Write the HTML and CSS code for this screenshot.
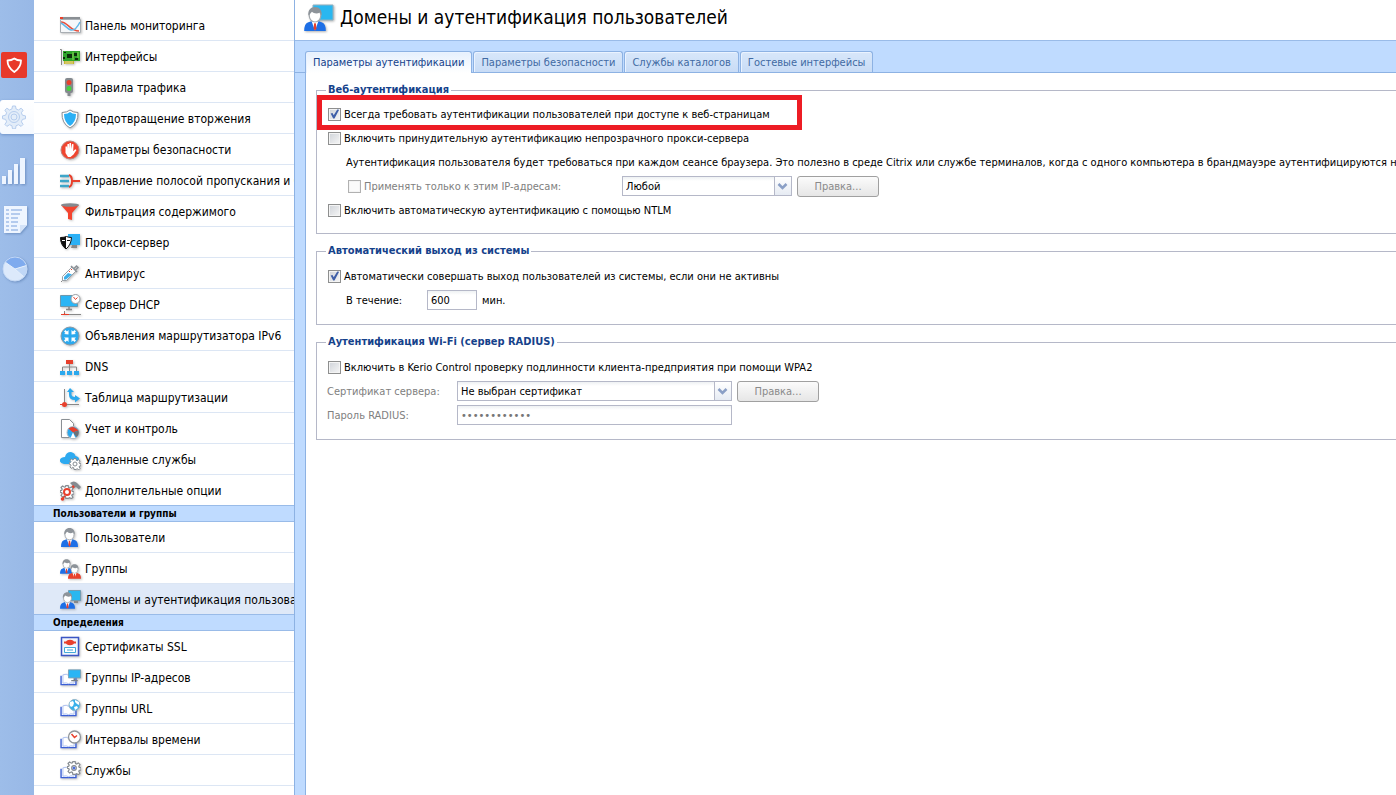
FILE: index.html
```html
<!DOCTYPE html>
<html lang="ru">
<head>
    <meta charset="UTF-8">
    <title>Домены и аутентификация пользователей</title>
    <link rel="stylesheet" href="styles.css">
</head>
<body>
    <!-- shared icon parts -->
    <svg class="defs" aria-hidden="true">
        <symbol id="person" viewBox="0 0 18 20">
            <path d="M0 20q0-6 3-7l4-1.500h4l4 1.500q3 1 3 7z" fill="currentColor"/>
            <path d="M6 11.500l3 8 3-8z" fill="#fff"/>
            <path d="M8.300 13.500h1.400l.5 4.500-1.200 1.800-1.200-1.800z" fill="#e8402c"/>
            <ellipse cx="9" cy="7" rx="4.800" ry="5.500" fill="#fff" stroke="#a3a8ad"/>
            <path d="M3.500 7C3 2.500 5.500 0 9 0s6 2.500 5.500 7l-1.500-2.500C11 6 8 5.500 6.500 4z" fill="#8d9399"/>
        </symbol>
        <symbol id="screen" viewBox="0 0 16 15">
            <path d="M.5.5h15v10H.5z" fill="#2bb5f5" stroke="#7d9bad"/>
            <path d="M7 11h2v2h3v1.500H4V13h3z" fill="#777f86"/>
        </symbol>
        <symbol id="book" viewBox="0 0 18 14">
            <path d="M1 3v9.500h16V3" fill="#fff" stroke="#3b5fd6" stroke-width="1.500"/>
            <path d="M3 11V2q4-1.500 6 .5 2-2 6-.5v9q-4-1-6 .5-2-1.500-6-.5z" fill="#fff" stroke="#a9bdf0"/>
        </symbol>
        <symbol id="gear" viewBox="0 0 24 24">
            <path d="M10 1h4l.6 3.500 2 .8 2.900-2 2.700 2.800-2 2.900.8 2 3 .6v3.800l-3 .6-.8 2 2 2.900-2.700 2.700-2.900-2-2 .9L14 23h-4l-.6-3.500-2-.9-2.900 2-2.700-2.700 2-2.900-.8-2-2.500-.6V9.600L3 9l.8-2-2-2.900L4.500 1.800l2.900 2 2-.8z" fill="#fff" stroke="currentColor" stroke-width="2"/>
            <circle cx="12" cy="12" r="4" fill="none" stroke="currentColor" stroke-width="2"/>
        </symbol>
    </svg>

    <div class="app">
        <nav class="rail" aria-label="Разделы">
            <a href="#" class="rail-logo" aria-label="Kerio Control">
                <svg width="26" height="26" viewBox="0 0 26 26"><rect width="26" height="26" rx="2" fill="#e8392a"/><path d="M6.500 8.500q4 0 6.800-2 2.700 2 6.700 2 0 7-6.700 11.500Q6.500 15.500 6.500 8.500z" fill="none" stroke="#fff" stroke-width="1.800" stroke-linejoin="round"/></svg>
            </a>
            <a href="#" class="rail-item active" aria-label="Конфигурация">
                <svg width="24" height="24" viewBox="0 0 24 24"><g fill="none" stroke="#b6cdee"><path d="M10.500 1h3l.6 3 2.400 1 2.600-1.800 2 2-1.700 2.600 1 2.400 3.100.7v2.800l-3.100.7-1 2.400 1.700 2.600-2 2-2.600-1.700-2.400 1-.6 3.100h-3l-.6-3.100-2.400-1-2.600 1.700-2-2 1.700-2.600-1-2.400-3.100-.7v-2.800l3.100-.7 1-2.400-1.700-2.600 2-2L7.500 5l2.400-1z" fill="#e3edf9"/><circle cx="12" cy="12" r="5.500"/><circle cx="12" cy="12" r="3"/></g></svg>
            </a>
            <a href="#" class="rail-item" aria-label="Состояние">
                <svg width="24" height="28" viewBox="0 0 24 28"><path d="M0 19h4v8H0zM6 13h4v14H6zM12 7h4v20h-4zM18 1h5v26h-5z" fill="#eef5ff"/></svg>
            </a>
            <a href="#" class="rail-item wide-icon" aria-label="Журналы">
                <svg width="24" height="28" viewBox="0 0 24 28"><path d="M0 0h23v19l-7 8H0z" fill="#eef5ff"/><path d="M16 27v-8h7z" fill="#d3e2f8"/><path d="M2 4h3M7 4h11M2 8h3M7 8h9M2 12h3M7 12h7M2 16h3M7 16h7M2 20h3M7 20h6M2 24h3M7 24h7" stroke="#b4cbee" stroke-width="2"/></svg>
            </a>
            <a href="#" class="rail-item" aria-label="Отчеты">
                <svg width="26" height="26" viewBox="0 0 26 26"><circle cx="13" cy="13" r="12" fill="#dce9fb"/><path d="M13 13L3 6A12 12 0 0 1 24.500 9.500z" fill="#7fabee"/><path d="M13 13l11.500-3.500A12 12 0 0 1 22 21z" fill="#c0d7f6"/><path d="M13 13L3 6M13 13l11.500-3.500M13 13l9 8" stroke="#e6f0fd"/><circle cx="13" cy="13" r="12" fill="none" stroke="#c3d8f5"/></svg>
            </a>
        </nav>

        <nav class="sidebar" aria-label="Меню">
            <ul>
                <li><a href="#">
                    <svg viewBox="0 0 22 22"><path d="M.5 4.500h20v13H.5z" fill="#f6f8fa" stroke="#a9aeb3"/><path d="M0 2h20v2H0z" fill="#8a8f94"/><path d="M0 2h3v2H0z" fill="#e8402c"/><path d="M1 7c7 0 9 9 18 9" fill="none" stroke="#e8503c" stroke-width="1.500"/><path d="M1 8c4 2 6 6 10 7s7-4 9-8" fill="none" stroke="#62b7e8" stroke-width="1.500"/></svg>
                    Панель мониторинга</a></li>
                <li><a href="#">
                    <svg viewBox="0 0 22 22"><path d="M0 3.500h1.500V19" fill="none" stroke="#888"/><path d="M3 5h17v10H3z" fill="#2fa32c"/><path d="M4 15h10v3H4z" fill="#c4b52c"/><path d="M6 15v3m2-3v3m2-3v3m2-3v3" stroke="#fff" stroke-width=".5"/><path d="M7 8h5v4H7zM14 7h3v3h-3zM3 11h2v2H3zM15 12h3v2h-3zM4 6h2v1H4z" fill="#0c2c0c"/><path d="M13 6v8M18 6v6" stroke="#8ad650"/></svg>
                    Интерфейсы</a></li>
                <li><a href="#">
                    <svg viewBox="0 0 22 22"><rect x="5" y="1" width="8" height="15" rx="2" fill="#84898e"/><path d="M7.500 16h3v3h-3z" fill="#84898e"/><circle cx="9" cy="5.500" r="2.500" fill="#e8402c"/><circle cx="9" cy="11.500" r="2.500" fill="#45d13e"/></svg>
                    Правила трафика</a></li>
                <li><a href="#">
                    <svg viewBox="0 0 22 22"><path d="M2 4.500q5 0 8-2.500 3 2.500 8 2.500.5 11-8 15.500Q1.500 15.500 2 4.500z" fill="#fff" stroke="#888e94"/><path d="M4 6q4 0 6-2 2 2 6 2 0 8-6 12Q4 14 4 6z" fill="#2bb0f5"/></svg>
                    Предотвращение вторжения</a></li>
                <li><a href="#">
                    <svg viewBox="0 0 22 22"><circle cx="10" cy="11" r="9" fill="#f0452f" stroke="#c08078"/><path d="M5.500 11V7.500h1.500V10l.5-5H9v5l.5-6H11l.2 6 .8-5 1.500.3-.3 7 2-2 1.300.8-3 4.400-3 2.500H8L5.500 14z" fill="#fff"/></svg>
                    Параметры безопасности</a></li>
                <li><a href="#">
                    <svg viewBox="0 0 22 22"><path d="M0 6h9M0 11h9M0 16h9" stroke="#3ea6c9" stroke-width="2.500"/><path d="M9 5q3 1 3 6 0 5-3 6M12 11h8" fill="none" stroke="#e8402c" stroke-width="2"/></svg>
                    Управление полосой пропускания и QoS</a></li>
                <li><a href="#">
                    <svg viewBox="0 0 22 22"><path d="M1 4h18l-7 8v7l-4-1v-6z" fill="#f4442e"/><ellipse cx="10" cy="4" rx="9" ry="1.800" fill="#858a8f"/></svg>
                    Фильтрация содержимого</a></li>
                <li><a href="#">
                    <svg viewBox="0 0 22 22"><path d="M8 2h12v11H8z" fill="#2bb0f5"/><path d="M12 13h5v3h-6z" fill="#888"/><path d="M.5 5.500q4 0 6-1 2 1 5 1Q11 13 6 17 .5 13 .5 5.500z" fill="#fff" stroke="#111"/><path d="M.5 5.500q4 0 5.500-1V17Q.5 13 .5 5.500z" fill="#111"/><path d="M2 8.500h3" stroke="#fff"/><path d="M7 8.500h3" stroke="#111"/></svg>
                    Прокси-сервер</a></li>
                <li><a href="#">
                    <svg viewBox="0 0 22 22"><path d="M1 19l3-3" stroke="#888"/><path d="M2.500 13.500L12 4l4 4-9.500 9.500H2.500z" fill="#fff" stroke="#9aa0a6"/><path d="M4 14l4-4 4 1.500L6 16.500H4z" fill="#3eaee8"/><path d="M11 3l6 6M14 5.500l2.500-2.500 1.500 1.500-2.500 2.500" fill="none" stroke="#8b9197" stroke-width="1.500"/><path d="M9 8l1 1m1-3l1 1" stroke="#e8402c"/></svg>
                    Антивирус</a></li>
                <li><a href="#">
                    <svg viewBox="0 0 22 22"><path d="M.5 1.500h17v11H.5z" fill="#2bb5f5" stroke="#6d98ad"/><path d="M9 13v3M6 15.500h6" stroke="#888" stroke-width="1.500"/><path d="M4.500 17v3M1 20.500h20" stroke="#888"/><path d="M1 20.500h8M4.500 19v2" stroke="#e8402c"/><circle cx="15.500" cy="5" r="4.500" fill="#fff" stroke="#9a9fa4"/><path d="M13.500 3l2 2.500 2-2" fill="none" stroke="#e8402c"/></svg>
                    Сервер DHCP</a></li>
                <li><a href="#">
                    <svg viewBox="0 0 22 22"><circle cx="10" cy="11" r="9" fill="#2ba9ee" stroke="#8799a6"/><path d="M8.500 9.500L4 9l1.500-1L4 6.500 5.500 5 7 6.500 8.500 5zM11.500 9.500V5L13 6.500 14.500 5 16 6.500 14.500 8l1.500 1zM8.500 12.500V17L7 15.500 5.500 17 4 15.500 5.500 14 4 12.500zM11.500 12.500H16L14.500 14l1.500 1.500-1.500 1.500-1.500-1.500-1.500 1.500z" fill="#fff"/></svg>
                    Объявления маршрутизатора IPv6</a></li>
                <li><a href="#">
                    <svg viewBox="0 0 22 22"><path d="M9.500 8v8M2.500 16v-5h14v5" fill="none" stroke="#888"/><path d="M6 4h7v4H6z" fill="#e8402c"/><path d="M0 15h5v4H0zM7 15h5v4H7zM14 15h5v4h-5z" fill="#2ba9ee"/></svg>
                    DNS</a></li>
                <li><a href="#">
                    <svg viewBox="0 0 22 22"><path d="M4.500 2v15.500H19" fill="none" stroke="#888"/><circle cx="4.500" cy="17.500" r="2.500" fill="#e8402c"/><path d="M0 17.500h4M4.500 20v-3" stroke="#e8402c"/><path d="M10 1l4 4h-2.500v3Q12 10 15 10V8l5 3.500-5 4v-2.500Q9 13 9 8V5H7z" fill="#2ba9ee"/></svg>
                    Таблица маршрутизации</a></li>
                <li><a href="#">
                    <svg viewBox="0 0 22 22"><path d="M1.500 1.500h8l4 4v14h-12z" fill="#fff" stroke="#8a8f94"/><circle cx="13" cy="14.500" r="6" fill="#2ba9ee" stroke="#b5babf"/><path d="M13 14.500L8.500 10.500q4.500-4 10 2z" fill="#e8402c"/><path d="M13 14.500l5.500-2q1 4-2 6.500z" fill="#6d7277"/><path d="M13 14.500l-2.500 5.500h5z" fill="#fff"/></svg>
                    Учет и контроль</a></li>
                <li><a href="#">
                    <svg viewBox="0 0 22 22"><path d="M4 15q-5-1-4-4.500Q1 8 5 8q1-5 6-5 4 1 4.500 4Q20 8 19 12q-1 3-4 3z" fill="#2eaaf0"/><use href="#gear" x="9" y="9" width="12" height="12" color="#858b91"/></svg>
                    Удаленные службы</a></li>
                <li><a href="#">
                    <svg viewBox="0 0 22 22"><path d="M10 3q4-3 7 0l4 4-2 2.500L16 7l-2 1-2-3z" fill="#858b91"/><path d="M14 6L10 10" stroke="#e8402c" stroke-width="2.500"/><use href="#gear" x="0" y="5" width="14" height="14" color="#858b91"/><circle cx="7" cy="12" r="3" fill="#fff" stroke="#e8402c" stroke-width="2"/><path d="M5 16l-2.500 2.500" stroke="#e8402c" stroke-width="1.500"/><circle cx="2.500" cy="19" r="1.800" fill="#e8402c"/></svg>
                    Дополнительные опции</a></li>
            </ul>
            <h2>Пользователи и группы</h2>
            <ul>
                <li><a href="#">
                    <svg viewBox="0 0 22 22"><use href="#person" x="1" y="1" width="17" height="19" color="#1d6fe6"/></svg>
                    Пользователи</a></li>
                <li><a href="#">
                    <svg viewBox="0 0 22 22"><use href="#person" x="0" y="1" width="13" height="15" color="#1d6fe6"/><use href="#person" x="8" y="6" width="13" height="15" color="#e8402c"/></svg>
                    Группы</a></li>
                <li class="selected"><a href="#" aria-current="page">
                    <svg viewBox="0 0 22 22"><path d="M8.500 1.500h12v10h-12z" fill="#29b7f0" stroke="#6f9cb3"/><path d="M14 12h4v2h-4z" fill="#888"/><use href="#person" x="0" y="3" width="15" height="17" color="#1d6fe6"/></svg>
                    Домены и аутентификация пользователей</a></li>
            </ul>
            <h2>Определения</h2>
            <ul>
                <li><a href="#">
                    <svg viewBox="0 0 22 22"><path d="M1.500 1.500h17v18h-17z" fill="#f1f6fd" stroke="#3b55c4" stroke-width="1.500"/><path d="M4 6.500h12" stroke="#e8402c" stroke-width="2"/><ellipse cx="10" cy="6.500" rx="4" ry="2.800" fill="#e8402c"/><path d="M4.500 11.500h11v5h-11z" fill="#fff" stroke="#43a9d8"/><path d="M7 14h6" stroke="#43a9d8"/></svg>
                    Сертификаты SSL</a></li>
                <li><a href="#">
                    <svg viewBox="0 0 22 22"><use href="#book" x="0" y="6" width="17" height="13"/><use href="#screen" x="8" y="2" width="13" height="13"/></svg>
                    Группы IP-адресов</a></li>
                <li><a href="#">
                    <svg viewBox="0 0 22 22"><use href="#book" x="0" y="6" width="17" height="13"/><circle cx="14.500" cy="7" r="5.500" fill="#38b0ea" stroke="#8fb4c9"/><path d="M10 4l3-1 1 2-1 3-2 1-1.500-2zM15 2l4 2v3l-2-1-2-2zM14 9l3-1 1 2-3 2z" fill="#fff"/></svg>
                    Группы URL</a></li>
                <li><a href="#">
                    <svg viewBox="0 0 22 22"><use href="#book" x="0" y="7" width="17" height="13"/><circle cx="14.500" cy="8" r="6" fill="#fff" stroke="#90959a" stroke-width="1.300"/><path d="M11.500 5l3 3.500 2.500-2" fill="none" stroke="#e8402c" stroke-width="1.500"/></svg>
                    Интервалы времени</a></li>
                <li><a href="#">
                    <svg viewBox="0 0 22 22"><use href="#book" x="0" y="6" width="17" height="13"/><use href="#gear" x="7" y="1" width="14" height="14" color="#858b91"/><circle cx="14" cy="8" r="1.500" fill="#4b6fdc"/></svg>
                    Службы</a></li>
            </ul>
        </nav>

        <main>
            <header>
                <svg width="30" height="28" viewBox="0 0 30 28"><path d="M9 1h20v15H9z" fill="#29b7f0" stroke="#8fb0c0"/><use href="#person" x="0" y="3" width="22" height="24" color="#1d6fe6"/></svg>
                <h1>Домены и аутентификация пользователей</h1>
            </header>

            <div class="tabs" role="tablist">
                <button class="tab active" role="tab" aria-selected="true">Параметры аутентификации</button>
                <button class="tab" role="tab" aria-selected="false">Параметры безопасности</button>
                <button class="tab" role="tab" aria-selected="false">Службы каталогов</button>
                <button class="tab" role="tab" aria-selected="false">Гостевые интерфейсы</button>
            </div>

            <form class="panel">
                <fieldset class="web">
                    <legend>Веб-аутентификация</legend>
                    <div class="highlight"></div>
                    <div class="row">
                        <input type="checkbox" id="always" checked>
                        <label for="always">Всегда требовать аутентификации пользователей при доступе к веб-страницам</label>
                    </div>
                    <div class="row">
                        <input type="checkbox" id="proxy">
                        <label for="proxy">Включить принудительную аутентификацию непрозрачного прокси-сервера</label>
                    </div>
                    <p class="row hint">Аутентификация пользователя будет требоваться при каждом сеансе браузера. Это полезно в среде Citrix или службе терминалов, когда с одного компьютера в брандмауэре аутентифицируются несколько пользователей.</p>
                    <div class="row nested">
                        <div class="ip-check">
                            <input type="checkbox" id="only-ip" disabled>
                            <label for="only-ip">Применять только к этим IP-адресам:</label>
                        </div>
                        <select class="ip-select" aria-label="IP-адреса" disabled>
                            <option>Любой</option>
                        </select>
                        <button type="button" class="btn" disabled>Правка...</button>
                    </div>
                    <div class="row">
                        <input type="checkbox" id="ntlm">
                        <label for="ntlm">Включить автоматическую аутентификацию с помощью NTLM</label>
                    </div>
                </fieldset>

                <fieldset class="logout">
                    <legend>Автоматический выход из системы</legend>
                    <div class="row">
                        <input type="checkbox" id="auto-logout" checked>
                        <label for="auto-logout">Автоматически совершать выход пользователей из системы, если они не активны</label>
                    </div>
                    <div class="row hint">
                        <label for="timeout" class="timeout-label">В течение:</label>
                        <input type="text" id="timeout" class="timeout" value="600">
                        <span>мин.</span>
                    </div>
                </fieldset>

                <fieldset class="radius">
                    <legend>Аутентификация Wi-Fi (сервер RADIUS)</legend>
                    <div class="row">
                        <input type="checkbox" id="wpa2">
                        <label for="wpa2">Включить в Kerio Control проверку подлинности клиента-предприятия при помощи WPA2</label>
                    </div>
                    <div class="row field">
                        <label for="cert">Сертификат сервера:</label>
                        <select id="cert" class="wide" disabled>
                            <option>Не выбран сертификат</option>
                        </select>
                        <button type="button" class="btn" disabled>Правка...</button>
                    </div>
                    <div class="row field">
                        <label for="secret">Пароль RADIUS:</label>
                        <input type="password" id="secret" class="wide" value="123456789012" disabled>
                    </div>
                </fieldset>
            </form>
        </main>
    </div>
</body>
</html>
```

FILE: styles.css
```css
* {
    box-sizing: border-box;
}

body {
    margin: 0;
    background: #fff;
    color: #000;
    font-family: "DejaVu Sans Condensed", "Noto Sans", sans-serif;
    font-size: 11px;
}

ul, h1, h2, p {
    margin: 0;
    padding: 0;
}

ul {
    list-style: none;
}

a {
    color: inherit;
    text-decoration: none;
}

button, input, select {
    font: inherit;
    margin: 0;
}

.defs {
    position: absolute;
    width: 0;
    height: 0;
}

.app {
    display: flex;
    height: 100vh;
    overflow: hidden;
}

/* left rail */
.rail {
    flex: none;
    width: 34px;
    padding-top: 52px;
    background: linear-gradient(to right, #9dbde9, #98b8e6);
}

.rail-logo {
    display: block;
    height: 48px;
    padding-left: 1px;
}

.rail-item {
    display: flex;
    align-items: center;
    height: 49px;
    padding-left: 2px;
}

.rail-item svg {
    filter: drop-shadow(1px 1px 1px rgba(70, 105, 160, 0.5));
}

.rail-item.wide-icon {
    padding-left: 4px;
}

.rail-item.active {
    height: 34px;
    margin-bottom: 12px;
    background: linear-gradient(#fff, #f5f9ff);
    border-radius: 3px 0 0 3px;
    box-shadow: 0 1px 3px #6f93c8;
}

.rail-item.active svg {
    filter: none;
}

/* menu */
.sidebar {
    position: relative;
    flex: none;
    width: 261px;
    padding-top: 10px;
    background: #fff;
    border-right: 1px solid #8db2e3;
    overflow: hidden;
}

.sidebar a {
    display: flex;
    align-items: center;
    gap: 3px;
    height: 31px;
    padding: 2px 0 0 26px;
    border-bottom: 1px solid #dce6f4;
    font-size: 12px;
    white-space: nowrap;
}

.sidebar svg {
    flex: none;
    width: 22px;
    height: 22px;
    filter: drop-shadow(1px 1px 1px rgba(0, 0, 0, 0.25));
}

.sidebar h2 {
    height: 16px;
    padding-left: 19px;
    background: #bfdbff;
    box-shadow: 0 -1px #99bbe8, inset 0 -1px #99bbe8;
    font-size: 10px;
    line-height: 15px;
}

.sidebar .selected {
    background: #dfe9f8;
}

/* content */
main {
    flex: 1;
    min-width: 0;
    display: flex;
    flex-direction: column;
    background: #bfdbff;
}

header {
    display: flex;
    align-items: center;
    gap: 6px;
    height: 41px;
    padding: 0 0 4px 9px;
    background: #fff;
    border-bottom: 1px solid #99bbe8;
}

header svg {
    filter: drop-shadow(1px 1px 1px rgba(0, 0, 0, 0.3));
}

h1 {
    font-size: 19px;
    font-weight: normal;
    line-height: 20px;
    padding-bottom: 2px;
    white-space: nowrap;
}

.tabs {
    display: flex;
    gap: 1px;
    padding: 10px 0 0 10px;
    border-bottom: 1px solid #8db2e3;
}

.tab {
    height: 21px;
    padding: 0 7px;
    border: 1px solid #8db2e3;
    border-bottom: 0;
    border-radius: 3px 3px 0 0;
    background: linear-gradient(#d8e7fa, #c8dcf6);
    box-shadow: inset 1px 1px #eaf3ff;
    color: #416aa3;
    white-space: nowrap;
}

.tab.active {
    height: 22px;
    margin-bottom: -1px;
    background: linear-gradient(#e6f0fd, #fff);
    color: #15428b;
}

.panel {
    flex: 1;
    margin-left: 10px;
    padding: 10px 0 0 10px;
    background: #fff;
    border-left: 1px solid #8db2e3;
    overflow: hidden;
}

fieldset {
    position: relative;
    min-width: 0;
    margin: 0 0 10px;
    padding: 6px 0 12px 10px;
    border: 1px solid #b5b8c8;
    border-right: 0;
}

legend {
    height: 14px;
    margin-left: -1px;
    padding: 0 2px;
    color: #15428b;
    font-weight: bold;
    line-height: 14px;
}

.web {
    padding-top: 5px;
    padding-bottom: 11px;
}

.row {
    display: flex;
    align-items: center;
    height: 24px;
    white-space: nowrap;
}

.row > input[type="checkbox"] {
    margin-left: 1px;
}

.hint {
    padding-left: 19px;
}

.nested {
    padding-left: 21px;
}

.ip-check {
    display: flex;
    align-items: center;
    width: 274px;
    color: #808080;
}

/* frame round the first option */
.highlight {
    position: absolute;
    top: -2px;
    left: 0;
    width: 485px;
    height: 35px;
    border: 5px solid #ed1c24;
    pointer-events: none;
}

input[type="checkbox"] {
    appearance: none;
    flex: none;
    width: 13px;
    height: 13px;
    margin-right: 3px;
    border: 1px solid #8e8f8f;
    background: linear-gradient(135deg, #cfd3d9, #f6f6f6);
    box-shadow: inset 0 0 0 1px #f4f4f4;
}

input[type="checkbox"]:disabled {
    border-color: #b1b1b1;
    background: #fbfbfb;
}

input[type="checkbox"]:checked::before {
    content: "";
    display: block;
    width: 11px;
    height: 11px;
    background: #3f5fa8;
    clip-path: polygon(15% 45%, 32% 42%, 43% 62%, 75% 8%, 92% 12%, 50% 92%, 38% 92%);
}

input[type="text"],
input[type="password"],
select {
    height: 20px;
    padding: 0 3px;
    border: 1px solid #b5b8c8;
    border-radius: 0;
    background: linear-gradient(#eef1f3, #fff 4px);
    color: #000;
    opacity: 1;
}

input[type="password"] {
    color: #777;
}

select {
    appearance: none;
    background:
        url("data:image/svg+xml,%3Csvg xmlns='http://www.w3.org/2000/svg' width='17' height='18'%3E%3Cpath d='M0 0v18' stroke='%23b5b8c8' stroke-width='2'/%3E%3Cpath d='M4.500 7l4 4 4-4' fill='none' stroke='%238a9fc6' stroke-width='2.500'/%3E%3C/svg%3E") right center no-repeat,
        linear-gradient(#fff, #e6ebf3) right center / 17px 18px no-repeat,
        linear-gradient(#eef1f3, #fff 4px);
}

.ip-select {
    width: 170px;
}

.wide {
    width: 275px;
}

.btn {
    width: 82px;
    height: 21px;
    margin-left: 5px;
    padding: 0;
    border: 1px solid #a0a0a0;
    border-radius: 3px;
    background: linear-gradient(#fbfbfb, #e6e6e6);
    color: #8a8a8a;
}

.timeout-label {
    width: 81px;
}

.timeout {
    width: 50px;
    margin-right: 5px;
}

.field label {
    width: 130px;
    color: #808080;
}
```
